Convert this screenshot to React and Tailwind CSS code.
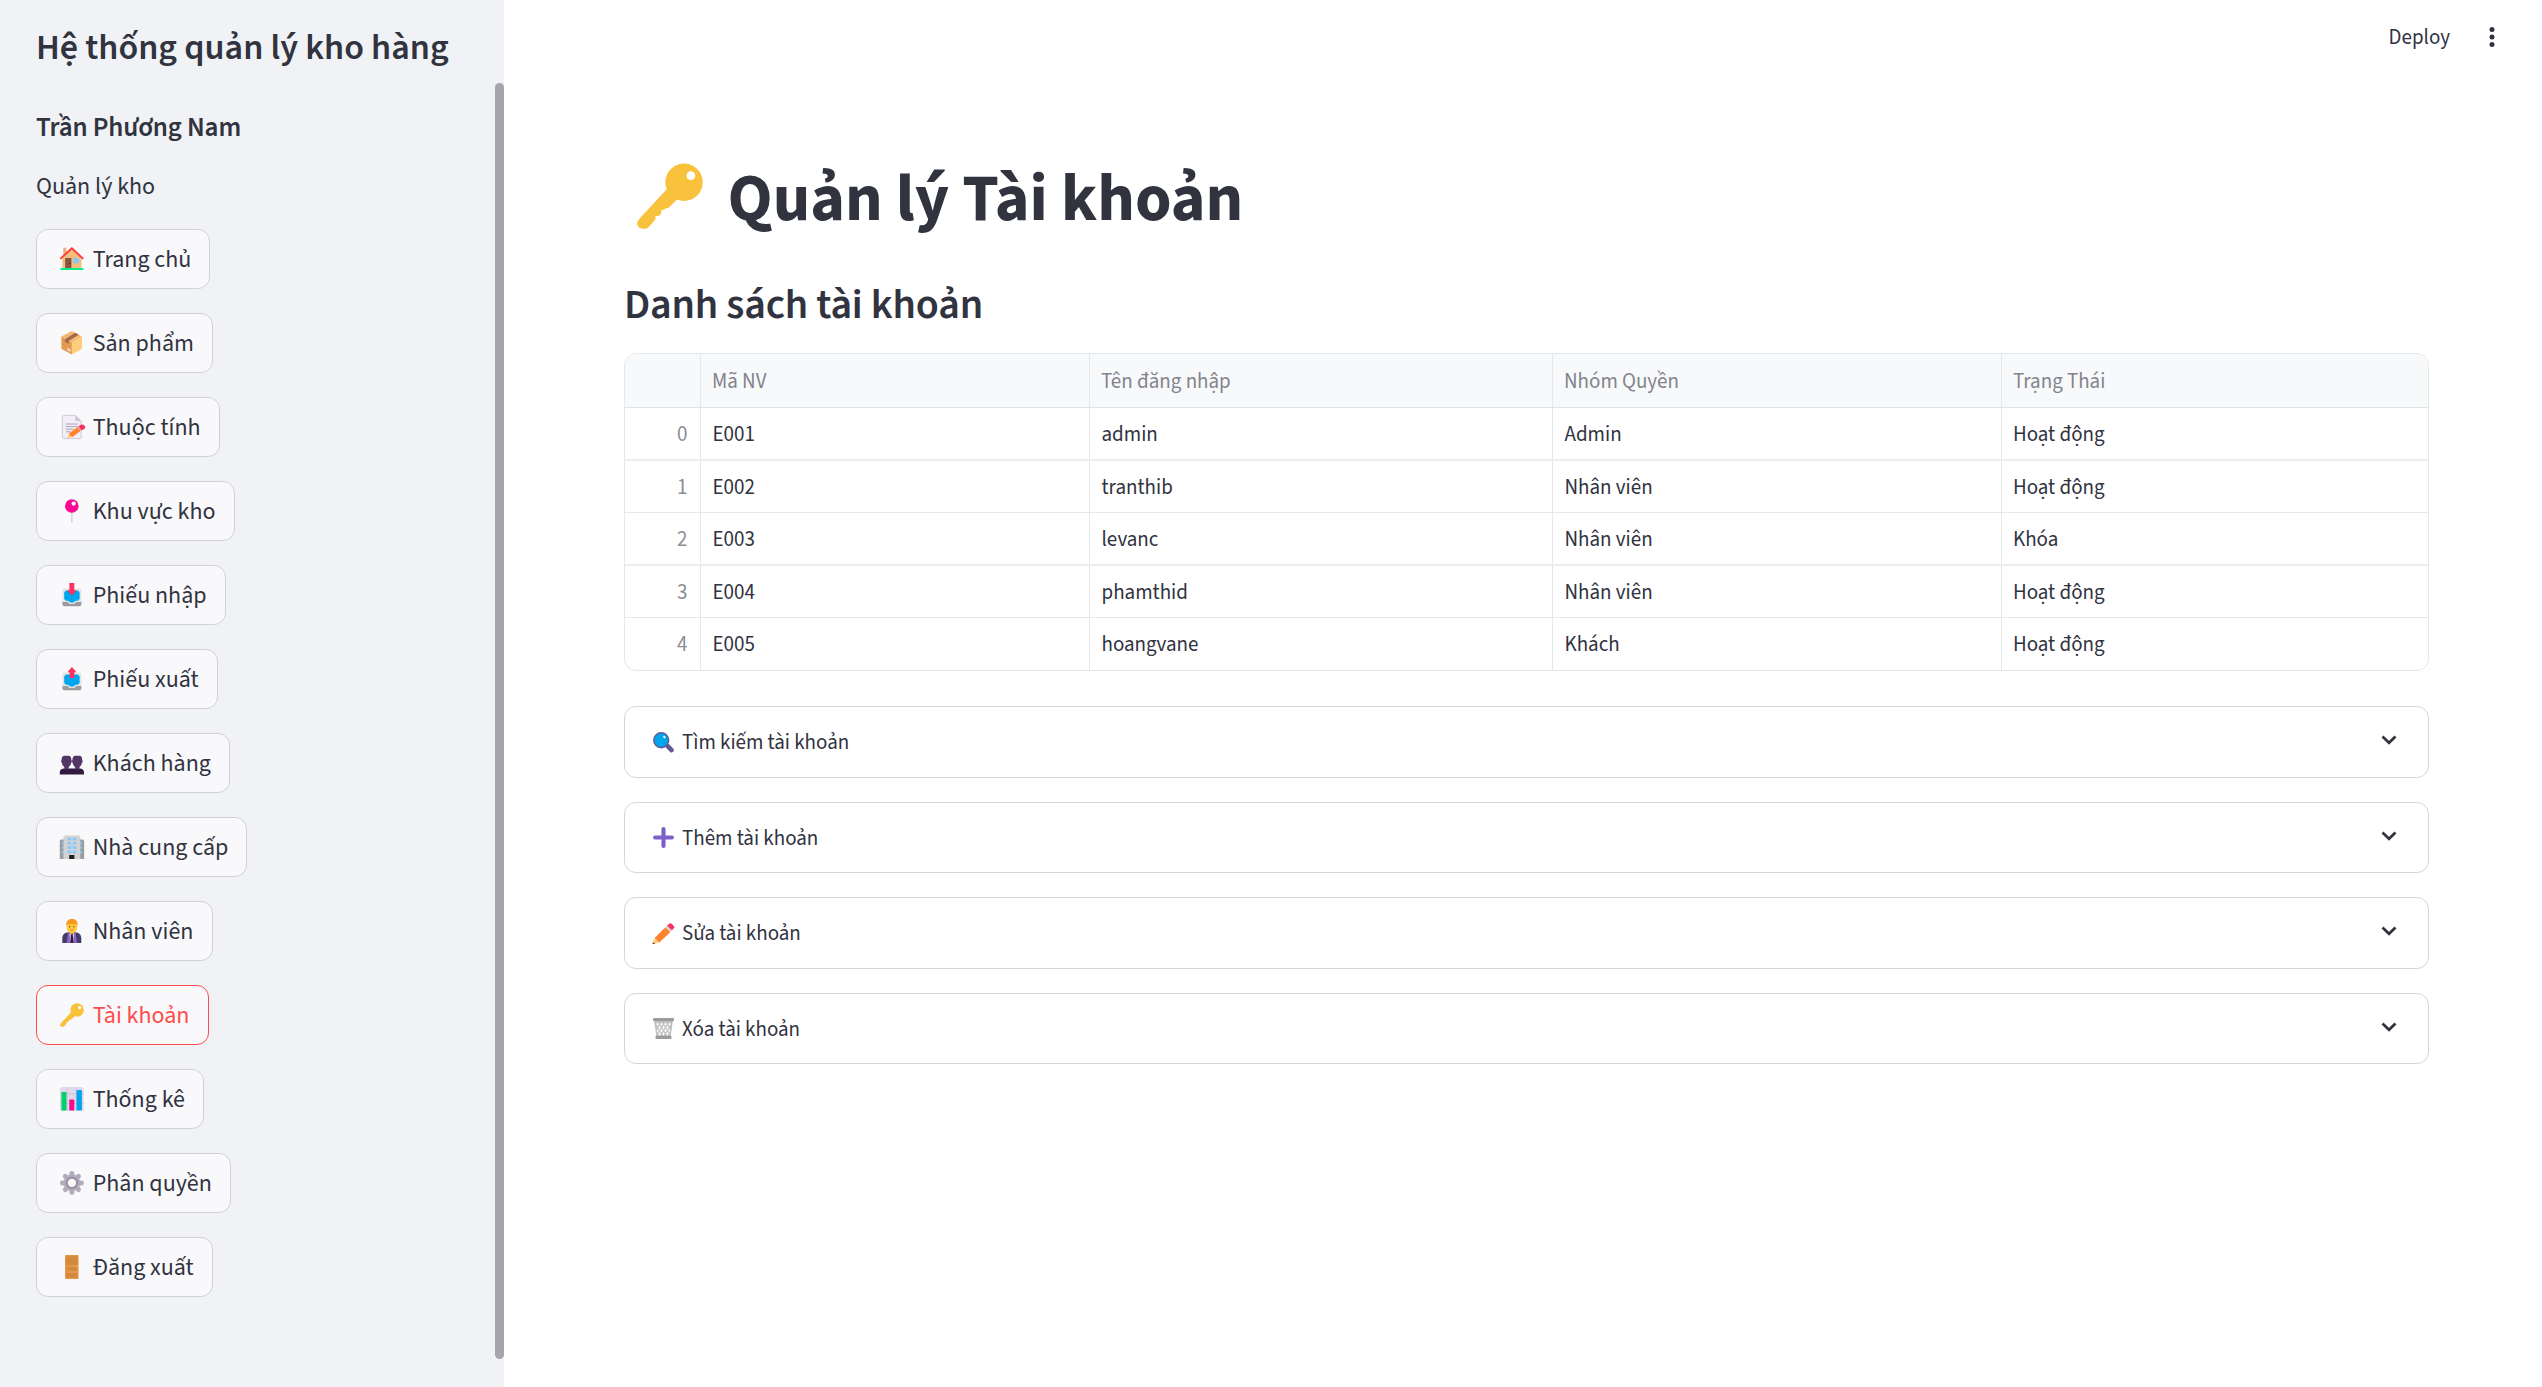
import React from "react";

const tray = (
  <>
    <rect x="2.4" y="5.6" width="19" height="16" rx="2.2" fill="#e4e4e6" />
    <path d="M2.4 19h5.2l1.800 1.900h5l1.800-1.900h5.200v2.300a2 2 0 0 1-2 2h-15a2 2 0 0 1-2-2z" fill="#9b9b9b" />
    <path d="M6 7.4h11.800l1.800 1.800v6.900L17.800 17.700h-2.300l-2 1.700h-3.300l-2-1.700H6l-1.800-1.600V9.200z" fill="#00a6ed" />
  </>
);

const icons = {
  home: (
    <>
      <path d="M3.3 .7h3v7h-3z" fill="#e9b07a" />
      <path d="M11.8 1.6 2.4 11v10.4h19V11z" fill="#f2be7c" />
      <path d="M5.2 11h6.2v10H5.2z" fill="#8a5340" />
      <circle cx="9.9" cy="16.4" r=".7" fill="#3b2a2a" />
      <path d="M13.3 11h5.4v5.3h-5.4z" fill="#83cbff" />
      <path d="M.9 11.4 11.8 1.2l10.9 10.2" fill="none" stroke="#ff3a3a" strokeWidth="1.9" strokeLinecap="round" strokeLinejoin="round" />
      <path d="M.3 21.1h23.2V23H.3z" fill="#00f08a" />
    </>
  ),
  box: (
    <>
      <path d="M1.4 5.3 11.9 11.4v12L2.1 18.2a1.3 1.3 0 0 1-.7-1.1z" fill="#e39a4c" />
      <path d="M22 5.3 11.9 11.4v12L21.3 18.2a1.3 1.3 0 0 0 .7-1.1z" fill="#ffce7c" />
      <path d="M11.9 0 22 5.4 11.9 11.6 1.4 5.4z" fill="#f3b971" />
      <path d="M5 8.2 15.2 1.8l3.6 2-10 6v3.1L5 10.8z" fill="#a56953" />
      <path d="m7.3 16.6 3.2 1.6v2.9l-3.2-1.5z" fill="#e6d9cf" />
    </>
  ),
  memo: (
    <>
      <path d="M3.6.4h12L21.2 6v16.4a1.2 1.2 0 0 1-1.2 1.2H3.6a1.2 1.2 0 0 1-1.2-1.2V1.6A1.2 1.2 0 0 1 3.6.4z" fill="#f3eef8" stroke="#cdc4d6" strokeWidth=".9" />
      <path d="M15.4.4 21.2 6h-4.6a1.2 1.2 0 0 1-1.2-1.2z" fill="#cdc4d6" />
      <path d="M5.8 9h12M5.8 11.6h12M5.8 14.2h8M5.8 16.8h5" stroke="#998ea4" strokeWidth=".8" />
      <path d="m7.3 23.2 1.6-4.6 3.3 3.2z" fill="#ffce7c" />
      <path d="M8.7 18.7 17.6 12l3.1 3.7-8.6 6.6z" fill="#ff822d" />
      <path d="m17.6 12 1.5-1.1 3 3.7-1.4 1.1z" fill="#f0a0b0" />
      <path d="M18.6 11.300l1.600-1.300c1.300-1 3-.7 4.200.4s1 2.800-.3 3.700l-2.200 1.400z" fill="#f92f60" />
    </>
  ),
  pin: (
    <>
      <path d="M11.1 12h1.5v11.4h-1.5z" fill="#d3d3d3" />
      <circle cx="11.8" cy="7" r="6.8" fill="#fb0994" />
      <circle cx="13.7" cy="4.6" r="2.1" fill="#fff" />
    </>
  ),
  inbox: (
    <>
      {tray}
      <path d="M9.4 0h4.9v7.300h1.700v.8L11.900 12.500 7.700 8.100v-.8h1.700z" fill="#ff3160" />
    </>
  ),
  outbox: (
    <>
      {tray}
      <path d="M11.9 0 16 4.400v.8h-1.700v5.900H9.600V5.200H7.900v-.8z" fill="#ff3160" />
    </>
  ),
  people: (
    <>
      <path d="M-.2 21.3c0-2.4 1.600-3.800 4.600-3.800h15c3 0 4.600 1.400 4.600 3.800v2.200H-.2z" fill="#321b41" />
      <path d="M3.800 4.700h5.200c1.700.5 2.400 2 2.400 4.600.8.500.7 2-.2 2.300-.5 2.600-1.500 3.600-2.500 4.500v2.400H4.300v-2.400c-1-.9-2-1.900-2.500-4.500-.9-.3-1-1.800-.2-2.300 0-2.600.7-4.100 2.200-4.600z" fill="#533566" />
      <path d="M14.800 4.700h5.200c1.600.5 2.200 2 2.200 4.600.8.500.7 2-.2 2.300-.5 2.600-1.500 3.600-2.500 4.500v2.400h-4.400v-2.400c-1-.9-2-1.900-2.500-4.500-.9-.3-1-1.800-.2-2.300 0-2.600.8-4.100 2.400-4.600z" fill="#533566" />
    </>
  ),
  office: (
    <>
      <path d="M-.2 6a1.500 1.500 0 0 1 1.500-1.500h3.500V24h-5zM24.100 6a1.500 1.500 0 0 0-1.500-1.500h-3.500V24h5z" fill="#9b9b9b" />
      <path d="M3.400 2.200A1.700 1.700 0 0 1 5.100.5h13.500a1.700 1.700 0 0 1 1.700 1.700V24H3.400z" fill="#d3d3d3" />
      <path d="M7.500 2.700h3.800v2.600H7.500zM12.600 2.700h3.800v2.600h-3.800zM7.500 7h3.800v2.600H7.500zM12.600 7h3.800v2.600h-3.800zM7.500 11.300h3.800v2.600H7.500zM12.600 11.300h3.800v2.600h-3.800zM7.500 15.600h3.800v2.600H7.500zM12.600 15.600h3.800v2.600h-3.800zM1.700 7.300h1.700v2.200H1.700zM1.700 11.600h1.700v2.200H1.700zM1.700 16h1.700v2.200H1.700zM20.300 7.300H22v2.200h-1.700zM20.300 11.600H22v2.200h-1.700zM20.300 16H22v2.200h-1.700z" fill="#83cbff" />
      <path d="M9.200 20h5.200v4H9.200z" fill="#212121" />
    </>
  ),
  worker: (
    <>
      <path d="M2.300 24v-4.500c0-3.400 2-6 5.500-6h8c3.500 0 5.500 2.600 5.500 6V24z" fill="#433b6b" />
      <path d="M8.200 13.200h7.200L17 24H6.600z" fill="#8d65c5" />
      <path d="m9.300 14.200 2.500 1.200 2.500-1.200L13 24h-2.400z" fill="#cdc4d6" />
      <path d="m11 15 1.700 0 .7 9h-3z" fill="#321b41" />
      <path d="M9.700 10.500h4.300v3.300l-2.200 2-2.100-2z" fill="#e8a81f" />
      <path d="M6.700 4.500h10.400v4.200c0 3-2.200 5.200-5.200 5.200S6.700 11.700 6.700 8.700z" fill="#ffc83d" />
      <path d="M6.300 7.300C5.700 2.800 8 .1 12 .1s6.200 2.700 5.500 7.200l-1-2.300c-2.600.3-6.400.3-9.200 0z" fill="#f79a1c" />
      <circle cx="9.7" cy="7.7" r=".7" fill="#6b3f1d" />
      <circle cx="14" cy="7.7" r=".7" fill="#6b3f1d" />
      <path d="M10.500 10.700c.9.600 1.800.6 2.700 0" stroke="#b5601a" strokeWidth=".8" fill="none" />
    </>
  ),
  key: (
    <>
      <path d="M10.700 9.600.9 20.300c-1 1.100-1.100 2-.5 2.800.9 1 2.600 1.100 3.600.4l2.300-2.500c.5-.5.600-1 .3-1.700.9.100 1.600-.2 2-.7.300-.4.300-.9.200-1.500.9.100 1.300-.1 1.600-.6.500 0 .9 0 1.200-.3l3.200-3.200z" fill="#f9c23c" />
      <circle cx="17.1" cy="7" r="6.8" fill="#f9c23c" />
      <circle cx="19.6" cy="4.6" r="1.6" fill="#fff" />
    </>
  ),
  chart: (
    <>
      <rect x="0" y="0" width="23.7" height="24" rx="2.6" fill="#e1d8ec" />
      <path d="M7.200 0v24M16.200 0v24M0 6.800h23.700M0 16.500h23.700" stroke="#cdc4d6" strokeWidth="1" />
      <rect x="1.500" y="5" width="5" height="18.500" rx=".8" fill="#00d26a" />
      <rect x="9.300" y="12.500" width="5" height="11" rx=".8" fill="#f70a8d" />
      <rect x="16.500" y="3" width="5.400" height="20.500" rx=".8" fill="#00a6ed" />
    </>
  ),
  gear: (
    <>
      <g stroke="#b4acbc" strokeWidth="5" strokeLinecap="round">
        <path d="M11.900 2.500v18.800M2.500 11.900h18.800M5.300 5.300l13.200 13.200M18.500 5.300 5.300 18.500" />
      </g>
      <circle cx="11.9" cy="11.9" r="8.3" fill="#b4acbc" />
      <circle cx="11.9" cy="11.9" r="5.200" fill="#f9f9fb" stroke="#998ea4" strokeWidth="2" />
    </>
  ),
  door: (
    <>
      <rect x="5" y="0" width="13.600" height="24" rx="1" fill="#e19747" />
      <path d="M6.500 1.600h10.600V10H6.500zM6.500 12.300h10.600v3.300H6.500zM6.500 18h10.600v4.400H6.500z" fill="#d3883e" />
      <circle cx="17" cy="11" r=".8" fill="#ffc21c" />
    </>
  ),
  search: (
    <>
      <path d="m16.800 16.200 4.400 4.500" stroke="#635994" strokeWidth="5.400" strokeLinecap="round" />
      <path d="m14.500 14.500 3 3" stroke="#635994" strokeWidth="2.400" />
      <circle cx="9.400" cy="9.400" r="8.500" fill="#00a6ed" stroke="#635994" strokeWidth="1.700" />
      <ellipse cx="13" cy="5.700" rx="1.200" ry="1.600" transform="rotate(-40 13 5.700)" fill="#fff" />
    </>
  ),
  plus: <path d="M12 2.400v19.200M2.400 12h19.200" stroke="#7d5fc9" strokeWidth="4.700" strokeLinecap="round" />,
  pencil: (
    <>
      <path d="M1.900 17.200 7 22.300l-5.600 1.600c-1.200.3-2-.5-1.700-1.600z" fill="#ffce7c" />
      <path d="m0 21.600 2.300 2.300-1.700.1c-.8 0-1.200-.5-1-1.200z" fill="#5c3a2a" />
      <path d="M1.900 17.200 14.300 4.800l5.600 5.400L7.200 22.400z" fill="#ff822d" />
      <path d="m14.200 4.900 2.100-2 5.500 5.500-2 2z" fill="#d3d3d3" />
      <path d="m16.200 3 2-2c1-1 2.300-1 3.300 0l2 2c1 1 1 2.300 0 3.400l-1.900 2z" fill="#f92f60" />
    </>
  ),
  trash: (
    <>
      <path d="M1.200 2.500h21.600L20 22H4z" fill="#bdbdbf" />
      <path
        d="M5.200 5.200l1.200 2-1.200 2-1.200-2zM9.700 5.200l1.300 2-1.300 2-1.300-2zM14.300 5.200l1.300 2-1.300 2-1.300-2zM18.800 5.200l1.200 2-1.200 2-1.200-2zM7.500 8.800l1.300 2.200-1.300 2.200L6.200 11zM12 8.800l1.300 2.200-1.300 2.200-1.300-2.200zM16.500 8.800l1.300 2.200-1.300 2.200-1.300-2.200zM5.300 12.700l1.200 2-1.200 2-.6-2zM9.700 12.700l1.300 2-1.300 2-1.300-2zM14.300 12.700l1.300 2-1.300 2-1.300-2zM18.700 12.700l.6 2-.6 2-1.200-2zM7.500 16.300l1.300 2-1.300 1.900-1.300-1.900zM12 16.300l1.300 2-1.300 1.900-1.300-1.900zM16.500 16.300l1.300 2-1.300 1.900-1.300-1.900z"
        fill="#fff"
        stroke="#fff"
        strokeWidth=".4"
      />
      <rect x="0" y="0" width="24" height="3.500" rx="1" fill="#9b9b9b" />
      <rect x="2.900" y="20.300" width="18.200" height="3.700" rx="1" fill="#9b9b9b" />
    </>
  ),
};

function Icon({ name, className }) {
  return (
    <svg viewBox="0 0 24 24" className={`shrink-0 overflow-visible ${className}`} aria-hidden="true">
      {icons[name]}
    </svg>
  );
}

const menu = [
  { icon: "home", label: "Trang chủ", width: "w-[174px]" },
  { icon: "box", label: "Sản phẩm", width: "w-[177px]" },
  { icon: "memo", label: "Thuộc tính", width: "w-[184px]" },
  { icon: "pin", label: "Khu vực kho", width: "w-[199px]" },
  { icon: "inbox", label: "Phiếu nhập", width: "w-[190px]" },
  { icon: "outbox", label: "Phiếu xuất", width: "w-[182px]" },
  { icon: "people", label: "Khách hàng", width: "w-[194px]" },
  { icon: "office", label: "Nhà cung cấp", width: "w-[211px]" },
  { icon: "worker", label: "Nhân viên", width: "w-[177px]" },
  { icon: "key", label: "Tài khoản", width: "w-[173px]", active: true },
  { icon: "chart", label: "Thống kê", width: "w-[168px]" },
  { icon: "gear", label: "Phân quyền", width: "w-[195px]" },
  { icon: "door", label: "Đăng xuất", width: "w-[177px]" },
];

const rows = [
  ["E001", "admin", "Admin", "Hoạt động"],
  ["E002", "tranthib", "Nhân viên", "Hoạt động"],
  ["E003", "levanc", "Nhân viên", "Khóa"],
  ["E004", "phamthid", "Nhân viên", "Hoạt động"],
  ["E005", "hoangvane", "Khách", "Hoạt động"],
];

const rowStyles = [
  "h-[53px] border-b-2 border-[#ededef]",
  "h-[52px] border-b border-[#e6e7e9]",
  "h-[53px] border-b-2 border-[#ededef]",
  "h-[52px] border-b border-[#e6e7e9]",
  "h-[52px]",
];

const panels = [
  { icon: "search", label: "Tìm kiếm tài khoản", size: "h-[72px] mb-6" },
  { icon: "plus", label: "Thêm tài khoản", size: "h-[71px] mb-6" },
  { icon: "pencil", label: "Sửa tài khoản", size: "h-[72px] mb-6" },
  { icon: "trash", label: "Xóa tài khoản", size: "h-[71px]" },
];

function Sidebar() {
  return (
    <aside className="flex w-[504px] shrink-0 justify-between bg-[#f0f2f6]">
      <div className="flex flex-col items-start pl-9 pt-[25px]">
        <h2 className="text-[36px] font-semibold leading-[45px]">Hệ thống quản lý kho hàng</h2>
        <h3 className="mt-10 text-[27px] font-semibold leading-9 tracking-[-0.13px]">Trần Phương Nam</h3>
        <p className="mt-[23px] text-2xl leading-9">Quản lý kho</p>
        <nav className="mt-6 flex flex-col gap-6">
          {menu.map((m) => (
            <button
              key={m.label}
              className={`flex h-[60px] items-center rounded-xl border bg-[#f9f9fb] pl-[22.7px] text-2xl leading-9 ${m.width} ${
                m.active ? "border-[#ff4b4b] text-[#ff4b4b]" : "border-[#cfd1d6]"
              }`}
            >
              <Icon name={m.icon} className="mr-[9px] size-6" />
              <span className="pt-0.5">{m.label}</span>
            </button>
          ))}
        </nav>
      </div>
      <div className="mt-[83px] h-[1276px] w-[9px] rounded-full bg-[#a5a5af]" />
    </aside>
  );
}

function AccountTable() {
  const cols = "grid grid-cols-[76px_389px_463px_449px_1fr]";
  const cell = "flex items-center border-r border-[#e6e7e9] pl-[11.5px]";
  const head = "flex items-center border-r border-[#e6e7e9] pl-[11px]";
  const last = "flex items-center pl-[11px]";
  return (
    <div className="overflow-hidden rounded-xl border border-[#e6e7e9] text-[21px] leading-8">
      <div className={`${cols} h-[54px] border-b border-[#e0e2e6] bg-[#f8f9fb] text-[#83848c]`}>
        <div className={head} />
        <div className={head}>Mã NV</div>
        <div className={head}>Tên đăng nhập</div>
        <div className={head}>Nhóm Quyền</div>
        <div className={last}>Trạng Thái</div>
      </div>
      {rows.map((r, i) => (
        <div key={r[0]} className={`${cols} ${rowStyles[i]}`}>
          <div className="flex items-center justify-end border-r border-[#e6e7e9] pr-[12.5px] text-[#8c8d94]">{i}</div>
          <div className={cell}>{r[0]}</div>
          <div className={cell}>{r[1]}</div>
          <div className={cell}>{r[2]}</div>
          <div className={last}>{r[3]}</div>
        </div>
      ))}
    </div>
  );
}

export default function App() {
  return (
    <div className="flex h-[1387px] w-[2542px] overflow-hidden whitespace-nowrap bg-white font-['Source_Sans_3','Source_Sans_Pro','Noto_Sans_CJK_SC',sans-serif] text-[#31333f]">
      <Sidebar />
      <div className="flex flex-1 flex-col">
        <header className="flex h-[74px] items-center justify-end pr-[47px]">
          <span className="text-[21px] leading-8">Deploy</span>
          <svg viewBox="0 0 6 20" className="ml-[39px] h-5 w-1.5" fill="#31333f" aria-hidden="true">
            <circle cx="3" cy="2.5" r="2.5" />
            <circle cx="3" cy="10" r="2.5" />
            <circle cx="3" cy="17.5" r="2.5" />
          </svg>
        </header>
        <main className="ml-[120px] w-[1805px] pt-20">
          <h1 className="flex h-[84px] items-center pl-[12.5px] text-[66px] font-bold leading-[80px]">
            <Icon name="key" className="mr-[25px] size-[66px]" />
            <span className="pt-[5px]">Quản lý Tài khoản</span>
          </h1>
          <h2 className="mt-[42px] text-[42px] font-semibold leading-[50px] tracking-[-0.2px]">Danh sách tài khoản</h2>
          <div className="mt-[23px]">
            <AccountTable />
          </div>
          <div className="mt-[35px] flex flex-col">
            {panels.map((p) => (
              <div
                key={p.label}
                className={`flex items-center rounded-xl border border-[#d6d6d9] pl-7 pr-[31px] text-[21px] leading-8 ${p.size}`}
              >
                <Icon name={p.icon} className="mr-2 size-[21px]" />
                <span className="flex-1">{p.label}</span>
                <svg viewBox="0 0 16 10" className="mb-1 h-2.5 w-4" fill="none" stroke="#31333f" strokeWidth="2.7" aria-hidden="true">
                  <path d="m1.500 1.500 6.500 6.300 6.500-6.300" />
                </svg>
              </div>
            ))}
          </div>
        </main>
      </div>
    </div>
  );
}
